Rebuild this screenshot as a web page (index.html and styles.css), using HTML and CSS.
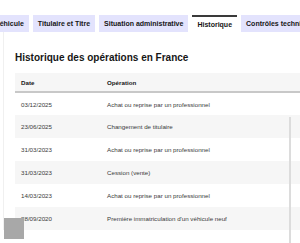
FILE: index.html
```html
<!DOCTYPE html>
<html>
<head>
    <title>Historique</title>
    <meta name="viewport" content="width=device-width, initial-scale=1.0">
    <link rel="stylesheet" href="styles.css">
</head>
<body>

    <div class="tabs">
        <div class="tab">Véhicule</div>
        <div class="tab">Titulaire et Titre</div>
        <div class="tab">Situation administrative</div>
        <div class="tab tab-active">Historique</div>
        <div class="tab">Contrôles techniques</div>
    </div>

    <div class="panel">
        <h2 class="panel-title">Historique des opérations en France</h2>

        <div class="table-wrap">
            <table class="history">
                <thead>
                    <tr>
                        <th class="col-date">Date</th>
                        <th>Opération</th>
                    </tr>
                </thead>
                <tbody>
                    <tr><td>03/12/2025</td><td>Achat ou reprise par un professionnel</td></tr>
                    <tr><td>23/06/2025</td><td>Changement de titulaire</td></tr>
                    <tr><td>31/03/2023</td><td>Achat ou reprise par un professionnel</td></tr>
                    <tr><td>31/03/2023</td><td>Cession (vente)</td></tr>
                    <tr><td>14/03/2023</td><td>Achat ou reprise par un professionnel</td></tr>
                    <tr><td>28/09/2020</td><td>Première immatriculation d'un véhicule neuf</td></tr>
                </tbody>
            </table>
            <div class="scroll-bar"></div>
        </div>
    </div>

    <div class="corner-box"></div>

</body>
</html>
```

FILE: styles.css
```css
* {
    margin: 0;
    padding: 0;
    box-sizing: border-box;
}

body {
    width: 300px;
    height: 243px;
    overflow: hidden;
    background: #fff;
    font-family: "Liberation Sans", Arial, sans-serif;
    color: #161616;
    position: relative;
}

.tabs {
    display: flex;
    gap: 4px;
    margin-top: 15px;
    margin-left: -10px;
    white-space: nowrap;
}

.tab {
    flex: none;
    height: 17px;
    line-height: 17px;
    padding: 0 5px;
    background: #e3e3fd;
    font-size: 7px;
    font-weight: bold;
    color: #161616;
}

.tab-active {
    background: #fff;
    border-top: 2px solid #3a3a3a;
    line-height: 15px;
}

.panel {
    padding: 0 0 0 14px;
    border-left: 1px solid #f0f0f0;
    margin-left: 3px;
}

.panel-title {
    font-size: 10px;
    font-weight: bold;
    line-height: 14px;
    padding-top: 19px;
    margin-left: -3px;
    margin-bottom: 8px;
}

.table-wrap {
    position: relative;
    margin-left: -3px;
}

.history {
    width: 100%;
    border-collapse: collapse;
    font-size: 6.2px;
}

.history th {
    text-align: left;
    font-weight: bold;
    background: #f6f6f6;
    height: 19px;
    padding: 0 6px;
    border-bottom: 2px solid #c8c8c8;
}

.history .col-date {
    width: 86px;
}

.history td {
    height: 23px;
    padding: 0 6px;
    color: #3a3a3a;
    white-space: nowrap;
}

.history tbody tr:nth-child(even) td {
    background: #f6f6f6;
}

.history td:last-child {
    padding-right: 20px;
}

.scroll-bar {
    position: absolute;
    left: 274px;
    top: 44px;
    width: 2px;
    height: 130px;
    background: #dcdcdc;
}

.corner-box {
    position: absolute;
    left: 4px;
    top: 218px;
    width: 20px;
    height: 21px;
    background: #a8a8a8;
}
```
